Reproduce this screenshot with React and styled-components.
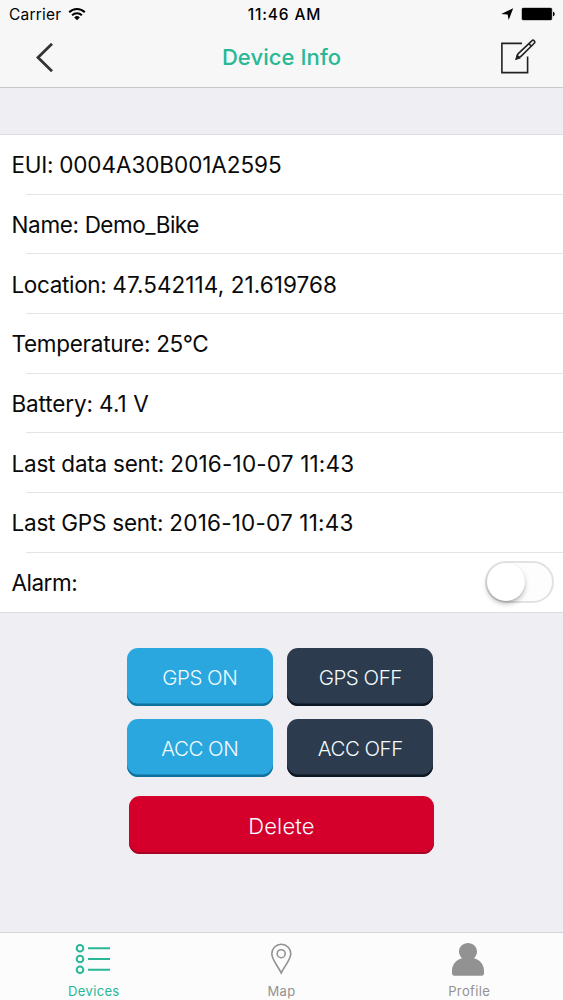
import React, { useState } from 'react'
import styled, { createGlobalStyle } from 'styled-components'

const details = [
  { label: 'EUI: ', value: '0004A30B001A2595', labelTracking: -0.3, tracking: -0.07 },
  { label: 'Name: ', value: 'Demo_Bike', labelTracking: -0.35, tracking: -0.5 },
  { label: 'Location: ', value: '47.542114, 21.619768', labelTracking: -0.35, tracking: 0.08 },
  { label: 'Temperature: ', value: '25°C', labelTracking: -0.28, tracking: -0.4 },
  { label: 'Battery: ', value: '4.1 V', labelTracking: -0.13, tracking: 0.1 },
  { label: 'Last data sent: ', value: '2016-10-07 11:43', labelTracking: -0.22, tracking: 0.19 },
  { label: 'Last GPS sent: ', value: '2016-10-07 11:43', labelTracking: -0.23, tracking: 0.19 },
]

function App() {
  const [alarm, setAlarm] = useState(false)

  return (
    <Screen>
      <GlobalStyle />
      <Header>
        <StatusBar>
          <StatusLeft>
            <Carrier>Carrier</Carrier>
            <WifiIcon />
          </StatusLeft>
          <Clock>11:46 AM</Clock>
          <StatusRight>
            <LocationIcon />
            <BatteryIcon />
          </StatusRight>
        </StatusBar>
        <NavBar>
          <NavButton aria-label="Back">
            <BackIcon />
          </NavButton>
          <Title>Device Info</Title>
          <NavButton $end aria-label="Edit">
            <EditIcon />
          </NavButton>
        </NavBar>
      </Header>

      <Content>
        <List>
          {details.map((item) => (
            <Row key={item.label}>
              <RowText $tracking={item.labelTracking}>
                {item.label}
                <Value $tracking={item.tracking}>{item.value}</Value>
              </RowText>
            </Row>
          ))}
          <Row>
            <RowText $tracking={-0.5}>Alarm:</RowText>
            <Switch role="switch" aria-checked={alarm} aria-label="Alarm" onClick={() => setAlarm(!alarm)} $on={alarm}>
              <Knob />
            </Switch>
          </Row>
        </List>

        <Actions>
          <ActionGrid>
            <Button $color="#2ba7df" $edge="#10719c">GPS ON</Button>
            <Button $color="#2c3b4d" $edge="#0d1623">GPS OFF</Button>
            <Button $color="#2ba7df" $edge="#10719c">ACC ON</Button>
            <Button $color="#2c3b4d" $edge="#0d1623">ACC OFF</Button>
          </ActionGrid>
          <DeleteButton $color="#d4002b" $edge="#a50523">Delete</DeleteButton>
        </Actions>
      </Content>

      <TabBar>
        <Tab $active>
          <DevicesIcon />
          <TabLabel>Devices</TabLabel>
        </Tab>
        <Tab>
          <MapIcon />
          <TabLabel>Map</TabLabel>
        </Tab>
        <Tab>
          <ProfileIcon />
          <TabLabel>Profile</TabLabel>
        </Tab>
      </TabBar>
    </Screen>
  )
}

export default App

const WifiIcon = () => (
  <svg width="18" height="14" viewBox="0 0 18 14" fill="none" stroke="#000" strokeWidth="2">
    <path d="M1.2 5.3a11 11 0 0 1 15.6 0" />
    <path d="M4.1 8.2a6.9 6.9 0 0 1 9.8 0" />
    <path d="M9 13.2 6.2 10.4a4 4 0 0 1 5.6 0z" fill="#000" stroke="none" />
  </svg>
)

const LocationIcon = () => (
  <svg width="14" height="14" viewBox="0 0 14 14">
    <path d="M13.2 1.2 8.7 13 7.6 7.5 1.2 7.1z" fill="#000" />
  </svg>
)

const BatteryIcon = () => (
  <svg width="34" height="14" viewBox="0 0 34 14">
    <rect x="0.4" y="0.4" width="31" height="13.2" rx="2" fill="#999" />
    <rect x="1" y="1" width="29.8" height="12" rx="1.3" fill="#000" />
    <path d="M32 4.7c2.2.4 2.2 4.1 0 4.5z" fill="#000" />
  </svg>
)

const BackIcon = () => (
  <svg width="17" height="29" viewBox="0 0 17 29" fill="none" stroke="#333" strokeWidth="2.8">
    <path d="M16 .8 2 14.5 16 28.2" />
  </svg>
)

const EditIcon = () => (
  <svg width="36" height="36" viewBox="0 0 36 36" fill="none" stroke="#222" strokeWidth="1.6">
    <path d="M22 4.4H1.9v29.2h25.7V17.6" />
    <path d="M16.6 19.4l1.4-4.6L31.8 1.8a1.6 1.6 0 0 1 2.4 2.4L20.7 17.6z" strokeLinejoin="round" />
    <path d="M28.8 4.6l2.7 2.7" />
    <path d="M16.2 19.9l1-3.2 2.2 2.1z" fill="#222" />
  </svg>
)

const DevicesIcon = () => (
  <svg width="38" height="32" viewBox="0 0 38 32" fill="none" stroke="currentColor" strokeWidth="2">
    <circle cx="5" cy="5.2" r="3.3" />
    <circle cx="5" cy="16" r="3.3" />
    <circle cx="5" cy="26.8" r="3.3" />
    <path d="M13 5.2h22M13 16h22M13 26.8h22" />
  </svg>
)

const MapIcon = () => (
  <svg width="22" height="32" viewBox="0 0 22 32" fill="none" stroke="currentColor" strokeWidth="1.6">
    <path d="M11.2 30C8.800 24.500 1.800 16.500 1.800 10.700a9.500 9.500 0 0 1 19 0C20.800 16.500 13.600 24.500 11.200 30z" />
    <circle cx="11.2" cy="10.7" r="4" />
  </svg>
)

const ProfileIcon = () => (
  <svg width="36" height="33" viewBox="0 0 36 33" fill="currentColor">
    <path d="M17 0c5 0 9 3.700 9 8.600 0 2.700-1.300 5-3 6.600 6 1.500 10 6.500 10 12.500v2.600c0 1.600-.8 2.400-2.400 2.400H3.400C1.800 32.700 1 31.900 1 30.300V27.700c0-6 4-11 10-12.500-1.700-1.600-3-3.900-3-6.600C8 3.700 12 0 17 0z" />
  </svg>
)

const GlobalStyle = createGlobalStyle`
  * {
    box-sizing: border-box;
  }
  body {
    margin: 0;
    font-family: Inter, "Liberation Sans", sans-serif;
    color: #0a0a0a;
  }
  button {
    font-family: inherit;
    border: 0;
    padding: 0;
  }
  svg {
    display: block;
    flex-shrink: 0;
  }
`

const Screen = styled.div`
  display: flex;
  flex-direction: column;
  width: 563px;
  height: 1000px;
  overflow: hidden;
  background-color: #efeef3;
`

const Header = styled.header`
  height: 88px;
  background-color: #f7f7f7;
  border-bottom: 1px solid #c9c9cc;
`

const StatusBar = styled.div`
  display: grid;
  grid-template-columns: 1fr auto 1fr;
  align-items: center;
  height: 28px;
  padding: 0 8px 0 9px;
  color: #000;
`

const StatusLeft = styled.div`
  display: flex;
  align-items: center;
  gap: 7px;
`

const StatusRight = styled.div`
  display: flex;
  align-items: center;
  justify-content: flex-end;
  gap: 7px;
`

const Carrier = styled.span`
  width: 52px;
  font-size: 15.5px;
  letter-spacing: 0.2px;
  margin-top: 1px;
`

const Clock = styled.span`
  font-size: 15.5px;
  font-weight: 550;
  letter-spacing: 0.85px;
  margin: 1px 0 0 5px;
`

const NavBar = styled.nav`
  display: grid;
  grid-template-columns: 1fr auto 1fr;
  align-items: center;
  height: 58px;
  padding: 0 36px;
`

const NavButton = styled.button`
  display: flex;
  background: none;
  justify-self: ${(props) => (props.$end ? 'end' : 'start')};
  margin-right: ${(props) => (props.$end ? '-9px' : '0')};
`

const Title = styled.h1`
  margin: 0;
  font-size: 22px;
  font-weight: 550;
  letter-spacing: 0.08px;
  color: #28b896;
`

const Content = styled.main`
  flex: 1;
  padding-top: 46px;
`

const List = styled.div`
  display: grid;
  grid-auto-rows: 59.67px;
  background-color: #fff;
  border-top: 1px solid #dcdce0;
  border-bottom: 1px solid #dcdce0;
`

const Row = styled.div`
  display: flex;
  align-items: center;
  justify-content: space-between;
  padding: 0 9px 0 11.5px;
  &:not(:last-child) {
    background: linear-gradient(#e4e4e6, #e4e4e6) 26px 100% / 100% 1px no-repeat;
  }
`

const RowText = styled.span`
  font-size: 22.5px;
  white-space: pre;
  letter-spacing: ${(props) => props.$tracking}px;
`

const Value = styled.span`
  letter-spacing: ${(props) => props.$tracking}px;
`

const Switch = styled.button`
  display: flex;
  align-items: center;
  justify-content: ${(props) => (props.$on ? 'flex-end' : 'flex-start')};
  width: 69px;
  height: 42px;
  border: 2px solid #e3e1e3;
  border-radius: 21px;
  background-color: ${(props) => (props.$on ? '#28b896' : '#fefdfe')};
`

const Knob = styled.span`
  width: 38px;
  height: 38px;
  border-radius: 50%;
  background-color: #fff;
  box-shadow: 0 3px 5px rgba(0, 0, 0, 0.25), 0 1px 1px rgba(0, 0, 0, 0.1);
`

const Actions = styled.div`
  display: flex;
  flex-direction: column;
  align-items: center;
  padding-top: 35px;
`

const ActionGrid = styled.div`
  display: grid;
  grid-template-columns: 146px 146px;
  gap: 12.5px 14.5px;
  margin-right: 3px;
`

const Button = styled.button`
  height: 58px;
  padding-top: 1px;
  border-radius: 11px;
  background-color: ${(props) => props.$color};
  box-shadow: inset 0 -2.5px 0 ${(props) => props.$edge};
  color: #f3fbff;
  font-size: 20.5px;
  font-weight: 350;
  letter-spacing: -0.5px;
`

const DeleteButton = styled(Button)`
  width: 305px;
  margin-top: 19.5px;
  font-size: 22px;
  letter-spacing: 0.15px;
  box-shadow: inset 0 -2px 0 ${(props) => props.$edge};
`

const TabBar = styled.footer`
  display: grid;
  grid-template-columns: repeat(3, 1fr);
  height: 68px;
  background-color: #fcfcfc;
  border-top: 1px solid #d5d3d7;
`

const Tab = styled.div`
  display: flex;
  flex-direction: column;
  align-items: center;
  justify-content: space-between;
  padding: 10px 0 1px;
  color: ${(props) => (props.$active ? '#28b896' : '#929292')};
`

const TabLabel = styled.span`
  font-size: 13px;
  line-height: 16px;
  letter-spacing: 0.35px;
`
